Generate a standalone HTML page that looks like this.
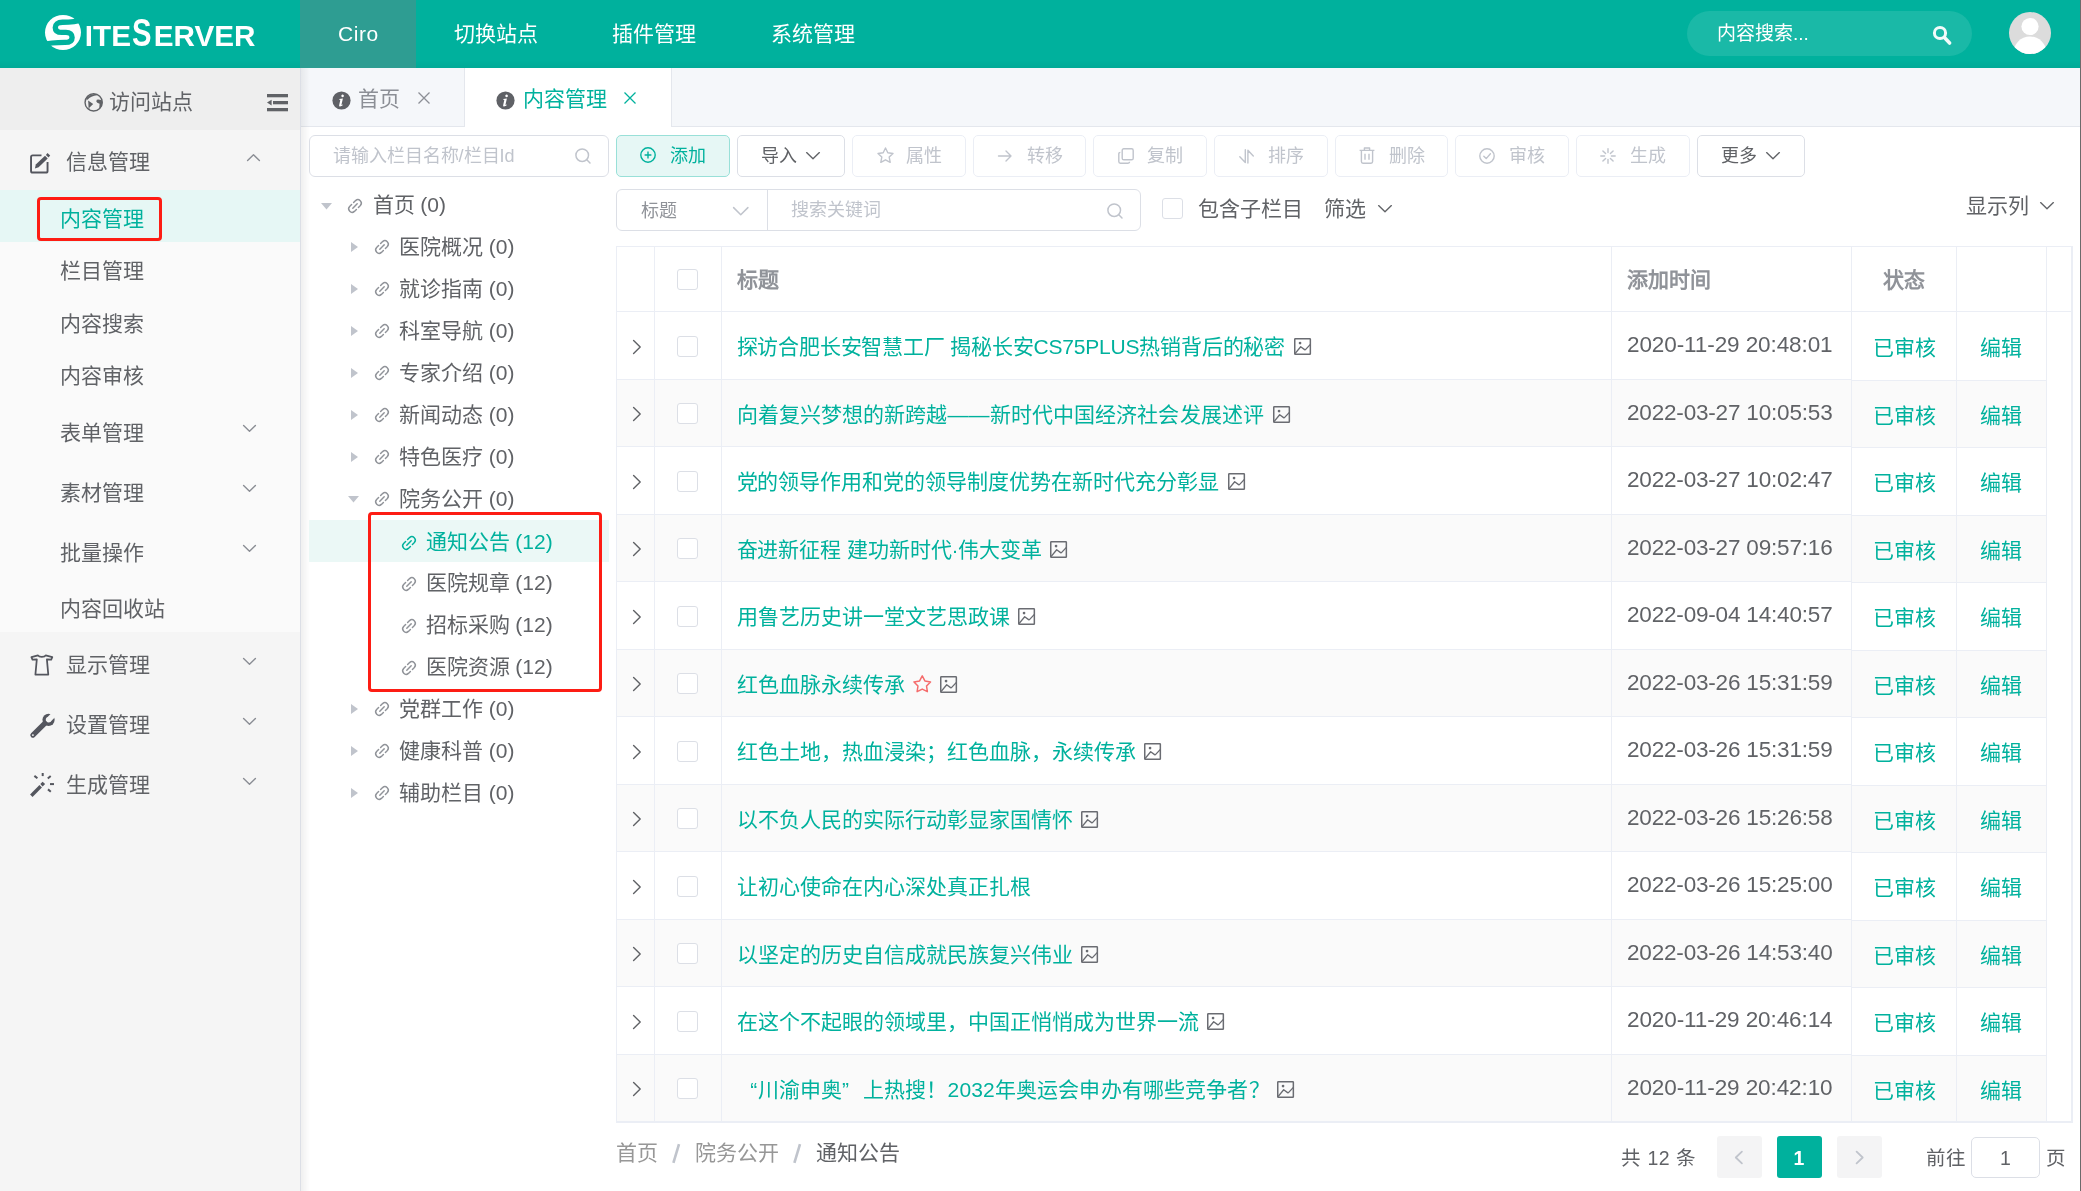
<!DOCTYPE html>
<html lang="zh-CN"><head><meta charset="utf-8"><title>SiteServer CMS</title><style>
*{box-sizing:border-box;margin:0;padding:0}
html,body{width:2081px;height:1191px;overflow:hidden;background:#fff}
body{position:relative;font-family:"Liberation Sans",sans-serif;color:#606266;font-size:21px}
#app{position:absolute;left:0;top:0;width:2081px;height:1191px;will-change:transform}
.a{position:absolute}
.t{position:absolute;white-space:nowrap;line-height:30px;height:30px}
svg{position:absolute;overflow:visible}
.hdr{left:0;top:0;width:2081px;height:68px;background:#00b19d}
.side{left:0;top:68px;width:300px;height:1123px;background:#f5f5f5}
.btn{position:absolute;top:135px;height:42px;border:1px solid #ebeef5;border-radius:5px;background:#fff;color:#c0c4cc;font-size:18px}
.btn .t{top:5px}
.cb{position:absolute;width:21px;height:21px;border:1px solid #dcdfe6;border-radius:3px;background:#fff}
.row{position:absolute;left:617px;width:1429px;height:68px}
</style></head><body>
<div id="app">
<div class="a hdr"></div>
<div class="a" style="left:0;top:60px;width:2081px;height:8px;background:linear-gradient(rgba(0,0,0,0),rgba(0,0,0,0.04))"></div>
<div class="a" style="left:300px;top:0;width:116px;height:68px;background:#2e9d92"></div>
<svg style="left:0px;top:0px" width="300" height="68" viewBox="0 0 300 68" >
<ellipse cx="63" cy="32.5" rx="18" ry="17.6" fill="#fff"/>
<path d="M83 19.5 C76 22 70 22.3 62.5 22.3 C57.5 22.3 55.3 24.6 55.3 27.4 C55.3 30.4 57.5 32.4 62 32.4 L66 32.4 C70 32.4 72.1 34.4 72.1 37.4 C72.1 40.4 70 42.4 65 42.4 C58 42.4 50 42.6 42 45" fill="none" stroke="#00b19d" stroke-width="5.4"/>
<g fill="#fff" font-family="Liberation Sans, sans-serif" font-weight="bold">
<text x="84.8" y="46" font-size="30" textLength="46.2" lengthAdjust="spacingAndGlyphs">ITE</text>
<text x="132" y="46" font-size="38.5" textLength="19.5" lengthAdjust="spacingAndGlyphs">S</text>
<text x="153.8" y="46" font-size="30" textLength="101.6" lengthAdjust="spacingAndGlyphs">ERVER</text>
</g>
</svg>
<div class="t" style="left:338px;top:19px;font-size:21px;color:#fff;letter-spacing:0.6px;">Ciro</div>
<div class="t" style="left:454px;top:19px;font-size:21px;color:#fff;">切换站点</div>
<div class="t" style="left:612px;top:19px;font-size:21px;color:#fff;">插件管理</div>
<div class="t" style="left:771px;top:19px;font-size:21px;color:#fff;">系统管理</div>
<div class="a" style="left:1687px;top:11px;width:285px;height:45px;border-radius:23px;background:rgba(255,255,255,0.1)"></div>
<div class="t" style="left:1717px;top:19px;font-size:19px;color:#fff;">内容搜索...</div>
<svg style="left:1931px;top:24px" width="22" height="22" viewBox="0 0 22 22" ><circle cx="9" cy="9" r="5.6" fill="none" stroke="#f2fbfa" stroke-width="3"/><path d="M13.4 13.6 L18.6 19" stroke="#f2fbfa" stroke-width="3.6" stroke-linecap="round"/></svg>
<svg style="left:2009px;top:12px" width="42" height="42" viewBox="0 0 42 42" ><defs><clipPath id="av"><circle cx="21" cy="21" r="21"/></clipPath></defs><circle cx="21" cy="21" r="21" fill="#dcdcdc"/><g clip-path="url(#av)" fill="#fff"><circle cx="21" cy="14.5" r="8.6"/><ellipse cx="21" cy="42" rx="17" ry="17.5"/></g></svg>
<div class="a side"></div>
<div class="a" style="left:0;top:68px;width:300px;height:62px;background:#eeeeee"></div>
<div class="a" style="left:0;top:190px;width:300px;height:442px;background:#fafafa"></div>
<div class="a" style="left:0;top:190px;width:300px;height:52px;background:#e6f7f5"></div>
<div class="a" style="left:300px;top:68px;width:1px;height:1123px;background:#dcdfe6"></div>
<svg style="left:84px;top:92.5px" width="19.2" height="19.2" viewBox="0 0 19.2 19.2" ><circle cx="9.65" cy="9.4" r="8.6" fill="none" stroke="#606266" stroke-width="1.4"/><path d="M4.1 7.5 L9.2 11 L5.3 14.8 L5.5 17 L4.6 16.4 L4.4 11 Z" fill="#606266"/><path d="M2 6.2 C3.4 3.2 7 1 12.8 1.1 L13.2 2.2 C9 2.6 5.6 4.2 3.6 6.8 Z" fill="#606266"/><path d="M12.8 6.7 L14.4 6.4 L16.9 6.9 L18.2 8 C18.8 11 17.8 14 15.2 15.9 L15.6 10.7 L13.3 9.7 L12.3 8.5 Z" fill="#606266"/></svg>
<div class="t" style="left:108.5px;top:87px;font-size:21px;color:#606266;">访问站点</div>
<svg style="left:267px;top:94px" width="21" height="17.4" viewBox="0 0 21 17.4" ><rect x="0" y="0" width="21" height="3.3" fill="#606266"/><rect x="6" y="7" width="15" height="3.3" fill="#606266"/><rect x="0" y="14" width="21" height="3.3" fill="#606266"/><path d="M0 8.6 L4.6 5.8 L4.6 11.4 Z" fill="#606266"/></svg>
<svg style="left:30px;top:153.5px" width="20" height="20" viewBox="0 0 20 20" ><path d="M11.5 1.35 H2.7 Q1.05 1.35 1.05 3 V16.9 Q1.05 18.55 2.7 18.55 H15.9 Q17.55 18.55 17.55 16.9 V8" fill="none" stroke="#54565e" stroke-width="1.9"/><path d="M4.9 14.4 L5.8 10.5 L15 1.8 L17.7 4.6 L8.6 13.2 Z" fill="#54565e"/><path d="M15.9 0.9 L17.5 -1.1 L20.2 1.6 L18.5 3.6 Z" fill="#54565e"/></svg>
<div class="t" style="left:66px;top:147px;font-size:21px;color:#606266;">信息管理</div>
<svg style="left:247.0px;top:154.0px" width="13" height="7" viewBox="0 0 13 7" ><path d="M0.6 6.4 L6.5 0.8 L12.4 6.4" fill="none" stroke="#8a8d94" stroke-width="1.4" stroke-linecap="round" stroke-linejoin="round"/></svg>
<div class="t" style="left:60px;top:204px;font-size:21px;color:#00b19d;">内容管理</div>
<div class="t" style="left:60px;top:256px;font-size:21px;color:#606266;">栏目管理</div>
<div class="t" style="left:60px;top:309px;font-size:21px;color:#606266;">内容搜索</div>
<div class="t" style="left:60px;top:361px;font-size:21px;color:#606266;">内容审核</div>
<div class="t" style="left:60px;top:418px;font-size:21px;color:#606266;">表单管理</div>
<svg style="left:242.5px;top:424.5px" width="13" height="7" viewBox="0 0 13 7" ><path d="M0.6 0.6 L6.5 6.2 L12.4 0.6" fill="none" stroke="#8a8d94" stroke-width="1.4" stroke-linecap="round" stroke-linejoin="round"/></svg>
<div class="t" style="left:60px;top:478px;font-size:21px;color:#606266;">素材管理</div>
<svg style="left:242.5px;top:484.5px" width="13" height="7" viewBox="0 0 13 7" ><path d="M0.6 0.6 L6.5 6.2 L12.4 0.6" fill="none" stroke="#8a8d94" stroke-width="1.4" stroke-linecap="round" stroke-linejoin="round"/></svg>
<div class="t" style="left:60px;top:538px;font-size:21px;color:#606266;">批量操作</div>
<svg style="left:242.5px;top:544.5px" width="13" height="7" viewBox="0 0 13 7" ><path d="M0.6 0.6 L6.5 6.2 L12.4 0.6" fill="none" stroke="#8a8d94" stroke-width="1.4" stroke-linecap="round" stroke-linejoin="round"/></svg>
<div class="t" style="left:60px;top:594px;font-size:21px;color:#606266;">内容回收站</div>
<div class="a" style="left:37px;top:197px;width:125px;height:44px;border:3px solid #fd1d14;border-radius:4px"></div>
<div class="t" style="left:66px;top:650px;font-size:21px;color:#606266;">显示管理</div>
<svg style="left:242.5px;top:657.5px" width="13" height="7" viewBox="0 0 13 7" ><path d="M0.6 0.6 L6.5 6.2 L12.4 0.6" fill="none" stroke="#8a8d94" stroke-width="1.4" stroke-linecap="round" stroke-linejoin="round"/></svg>
<div class="t" style="left:66px;top:710px;font-size:21px;color:#606266;">设置管理</div>
<svg style="left:242.5px;top:717.5px" width="13" height="7" viewBox="0 0 13 7" ><path d="M0.6 0.6 L6.5 6.2 L12.4 0.6" fill="none" stroke="#8a8d94" stroke-width="1.4" stroke-linecap="round" stroke-linejoin="round"/></svg>
<div class="t" style="left:66px;top:770px;font-size:21px;color:#606266;">生成管理</div>
<svg style="left:242.5px;top:777.5px" width="13" height="7" viewBox="0 0 13 7" ><path d="M0.6 0.6 L6.5 6.2 L12.4 0.6" fill="none" stroke="#8a8d94" stroke-width="1.4" stroke-linecap="round" stroke-linejoin="round"/></svg>
<svg style="left:30px;top:654px" width="23.6" height="22" viewBox="0 0 23.6 22" ><path d="M8 1.3 L1.4 3.1 L2.5 5.7 L6.8 5.3 L5.4 20.6 H18.3 L16.9 5.3 L21.2 5.7 L22.3 3.1 L15.7 1.3 C14.6 3.4 9.1 3.4 8 1.3 Z" fill="none" stroke="#54565e" stroke-width="1.75" stroke-linejoin="round"/></svg>
<svg style="left:29.7px;top:713.5px" width="24" height="24" viewBox="0 0 24 24" ><circle cx="18.55" cy="5.85" r="6.1" fill="#54565e"/><path d="M18.55 5.85 L26 -1.6" stroke="#f5f5f5" stroke-width="5.5"/><circle cx="18.55" cy="5.85" r="2.75" fill="#f5f5f5"/><path d="M2.9 21.1 L14.8 9.4" stroke="#54565e" stroke-width="5.2" stroke-linecap="round"/><circle cx="2.9" cy="21.1" r="0.95" fill="#f5f5f5"/></svg>
<svg style="left:30px;top:773px" width="23.6" height="23.6" viewBox="0 0 23.6 23.6" ><path d="M1.3 22.7 L10.7 13.3" stroke="#54565e" stroke-width="3.5"/><path d="M10.3 11 L12.6 8.7 L15.1 11 L12.6 13.6 Z" fill="#54565e"/><g stroke="#54565e" stroke-width="2"><path d="M12.7 0 V3.1"/><path d="M4.4 2.9 L7.4 5.3"/><path d="M20.7 3 L17.8 5.4"/><path d="M20 11.1 H24"/><path d="M18 16.4 L20.8 18.7"/></g></svg>
<div class="a" style="left:301px;top:68px;width:1780px;height:59px;background:#f5f7fa;border-bottom:1px solid #e4e7ed"></div>
<div class="a" style="left:464px;top:68px;width:1px;height:59px;background:#e4e7ed"></div>
<div class="a" style="left:465px;top:68px;width:206px;height:59px;background:#fff"></div>
<div class="a" style="left:671px;top:68px;width:1px;height:59px;background:#e4e7ed"></div>
<div class="a" style="left:301px;top:68px;width:9px;height:1123px;background:linear-gradient(90deg,rgba(0,0,0,0.06),rgba(0,0,0,0))"></div>
<svg style="left:331.5px;top:90.5px" width="19" height="19" viewBox="0 0 19 19" ><circle cx="9.5" cy="9.5" r="9.1" fill="#5f6166"/><path d="M10.6 3.6 a1.3 1.3 0 1 1 -0.01 0 Z" fill="#fff"/><path d="M7.2 8 L10.9 7.4 L9.5 13.6 C9.4 14.2 9.7 14.2 10.6 13.6 L10.8 14 C9.8 15 8.8 15.4 8.1 15.4 C7.2 15.4 7 14.8 7.2 13.9 L8.3 8.9 L7.1 8.6 Z" fill="#fff"/></svg>
<div class="t" style="left:357.5px;top:84px;font-size:21px;color:#8c8f96;">首页</div>
<svg style="left:417.6px;top:91.6px" width="12" height="12" viewBox="0 0 12 12" ><path d="M0.5 0.5 L11.5 11.5 M11.5 0.5 L0.5 11.5" stroke="#8c8f96" stroke-width="1.25"/></svg>
<svg style="left:496.0px;top:90.5px" width="19" height="19" viewBox="0 0 19 19" ><circle cx="9.5" cy="9.5" r="9.1" fill="#5f6166"/><path d="M10.6 3.6 a1.3 1.3 0 1 1 -0.01 0 Z" fill="#fff"/><path d="M7.2 8 L10.9 7.4 L9.5 13.6 C9.4 14.2 9.7 14.2 10.6 13.6 L10.8 14 C9.8 15 8.8 15.4 8.1 15.4 C7.2 15.4 7 14.8 7.2 13.9 L8.3 8.9 L7.1 8.6 Z" fill="#fff"/></svg>
<div class="t" style="left:522.5px;top:84px;font-size:21px;color:#00b19d;">内容管理</div>
<svg style="left:624.4px;top:91.6px" width="12" height="12" viewBox="0 0 12 12" ><path d="M0.5 0.5 L11.5 11.5 M11.5 0.5 L0.5 11.5" stroke="#00b19d" stroke-width="1.25"/></svg>
<div class="a" style="left:309px;top:135px;width:300px;height:42px;border:1px solid #dcdfe6;border-radius:6px;background:#fff"></div>
<div class="t" style="left:332.5px;top:141px;font-size:18px;color:#c0c4cc;">请输入栏目名称/栏目Id</div>
<svg style="left:574.8px;top:148.2px" width="16" height="16" viewBox="0 0 16 16" ><circle cx="7.2" cy="7.2" r="6.3" fill="none" stroke="#c0c4cc" stroke-width="1.5"/><path d="M11.8 11.8 L15 15" stroke="#c0c4cc" stroke-width="1.5" stroke-linecap="round"/></svg>
<div class="a" style="left:309px;top:520px;width:300px;height:42px;background:#ebf8f6"></div>
<svg style="left:321.3px;top:202.8px" width="11" height="6.4" viewBox="0 0 11 6.4" ><path d="M0 0 L11 0 L5.5 6.4 Z" fill="#c0c4cc"/></svg>
<svg style="left:347px;top:198px" width="16" height="16" viewBox="0 0 16 16" ><g fill="none" stroke="#909399" stroke-width="1.45" stroke-linecap="round"><path d="M6.6 4.6 L8.6 2.6 A3.4 3.4 0 0 1 13.4 7.4 L11.4 9.4"/><path d="M9.4 11.4 L7.4 13.4 A3.4 3.4 0 0 1 2.6 8.6 L4.6 6.6"/><path d="M5.8 10.2 L10.2 5.8"/></g></svg>
<div class="t" style="left:372.5px;top:190px;font-size:21px;color:#606266;">首页 (0)</div>
<svg style="left:350.9px;top:242.2px" width="7" height="10" viewBox="0 0 7 10" ><path d="M0 0 L7 5 L0 10 Z" fill="#c0c4cc"/></svg>
<svg style="left:373.5px;top:239px" width="16" height="16" viewBox="0 0 16 16" ><g fill="none" stroke="#909399" stroke-width="1.45" stroke-linecap="round"><path d="M6.6 4.6 L8.6 2.6 A3.4 3.4 0 0 1 13.4 7.4 L11.4 9.4"/><path d="M9.4 11.4 L7.4 13.4 A3.4 3.4 0 0 1 2.6 8.6 L4.6 6.6"/><path d="M5.8 10.2 L10.2 5.8"/></g></svg>
<div class="t" style="left:399px;top:232px;font-size:21px;color:#606266;">医院概况 (0)</div>
<svg style="left:350.9px;top:284.2px" width="7" height="10" viewBox="0 0 7 10" ><path d="M0 0 L7 5 L0 10 Z" fill="#c0c4cc"/></svg>
<svg style="left:373.5px;top:281px" width="16" height="16" viewBox="0 0 16 16" ><g fill="none" stroke="#909399" stroke-width="1.45" stroke-linecap="round"><path d="M6.6 4.6 L8.6 2.6 A3.4 3.4 0 0 1 13.4 7.4 L11.4 9.4"/><path d="M9.4 11.4 L7.4 13.4 A3.4 3.4 0 0 1 2.6 8.6 L4.6 6.6"/><path d="M5.8 10.2 L10.2 5.8"/></g></svg>
<div class="t" style="left:399px;top:274px;font-size:21px;color:#606266;">就诊指南 (0)</div>
<svg style="left:350.9px;top:326.2px" width="7" height="10" viewBox="0 0 7 10" ><path d="M0 0 L7 5 L0 10 Z" fill="#c0c4cc"/></svg>
<svg style="left:373.5px;top:323px" width="16" height="16" viewBox="0 0 16 16" ><g fill="none" stroke="#909399" stroke-width="1.45" stroke-linecap="round"><path d="M6.6 4.6 L8.6 2.6 A3.4 3.4 0 0 1 13.4 7.4 L11.4 9.4"/><path d="M9.4 11.4 L7.4 13.4 A3.4 3.4 0 0 1 2.6 8.6 L4.6 6.6"/><path d="M5.8 10.2 L10.2 5.8"/></g></svg>
<div class="t" style="left:399px;top:316px;font-size:21px;color:#606266;">科室导航 (0)</div>
<svg style="left:350.9px;top:368.2px" width="7" height="10" viewBox="0 0 7 10" ><path d="M0 0 L7 5 L0 10 Z" fill="#c0c4cc"/></svg>
<svg style="left:373.5px;top:365px" width="16" height="16" viewBox="0 0 16 16" ><g fill="none" stroke="#909399" stroke-width="1.45" stroke-linecap="round"><path d="M6.6 4.6 L8.6 2.6 A3.4 3.4 0 0 1 13.4 7.4 L11.4 9.4"/><path d="M9.4 11.4 L7.4 13.4 A3.4 3.4 0 0 1 2.6 8.6 L4.6 6.6"/><path d="M5.8 10.2 L10.2 5.8"/></g></svg>
<div class="t" style="left:399px;top:358px;font-size:21px;color:#606266;">专家介绍 (0)</div>
<svg style="left:350.9px;top:410.2px" width="7" height="10" viewBox="0 0 7 10" ><path d="M0 0 L7 5 L0 10 Z" fill="#c0c4cc"/></svg>
<svg style="left:373.5px;top:407px" width="16" height="16" viewBox="0 0 16 16" ><g fill="none" stroke="#909399" stroke-width="1.45" stroke-linecap="round"><path d="M6.6 4.6 L8.6 2.6 A3.4 3.4 0 0 1 13.4 7.4 L11.4 9.4"/><path d="M9.4 11.4 L7.4 13.4 A3.4 3.4 0 0 1 2.6 8.6 L4.6 6.6"/><path d="M5.8 10.2 L10.2 5.8"/></g></svg>
<div class="t" style="left:399px;top:400px;font-size:21px;color:#606266;">新闻动态 (0)</div>
<svg style="left:350.9px;top:452.2px" width="7" height="10" viewBox="0 0 7 10" ><path d="M0 0 L7 5 L0 10 Z" fill="#c0c4cc"/></svg>
<svg style="left:373.5px;top:449px" width="16" height="16" viewBox="0 0 16 16" ><g fill="none" stroke="#909399" stroke-width="1.45" stroke-linecap="round"><path d="M6.6 4.6 L8.6 2.6 A3.4 3.4 0 0 1 13.4 7.4 L11.4 9.4"/><path d="M9.4 11.4 L7.4 13.4 A3.4 3.4 0 0 1 2.6 8.6 L4.6 6.6"/><path d="M5.8 10.2 L10.2 5.8"/></g></svg>
<div class="t" style="left:399px;top:442px;font-size:21px;color:#606266;">特色医疗 (0)</div>
<svg style="left:348.3px;top:495.8px" width="11" height="6.4" viewBox="0 0 11 6.4" ><path d="M0 0 L11 0 L5.5 6.4 Z" fill="#c0c4cc"/></svg>
<svg style="left:373.5px;top:491px" width="16" height="16" viewBox="0 0 16 16" ><g fill="none" stroke="#909399" stroke-width="1.45" stroke-linecap="round"><path d="M6.6 4.6 L8.6 2.6 A3.4 3.4 0 0 1 13.4 7.4 L11.4 9.4"/><path d="M9.4 11.4 L7.4 13.4 A3.4 3.4 0 0 1 2.6 8.6 L4.6 6.6"/><path d="M5.8 10.2 L10.2 5.8"/></g></svg>
<div class="t" style="left:399px;top:484px;font-size:21px;color:#606266;">院务公开 (0)</div>
<svg style="left:350.9px;top:704.2px" width="7" height="10" viewBox="0 0 7 10" ><path d="M0 0 L7 5 L0 10 Z" fill="#c0c4cc"/></svg>
<svg style="left:373.5px;top:701px" width="16" height="16" viewBox="0 0 16 16" ><g fill="none" stroke="#909399" stroke-width="1.45" stroke-linecap="round"><path d="M6.6 4.6 L8.6 2.6 A3.4 3.4 0 0 1 13.4 7.4 L11.4 9.4"/><path d="M9.4 11.4 L7.4 13.4 A3.4 3.4 0 0 1 2.6 8.6 L4.6 6.6"/><path d="M5.8 10.2 L10.2 5.8"/></g></svg>
<div class="t" style="left:399px;top:694px;font-size:21px;color:#606266;">党群工作 (0)</div>
<svg style="left:350.9px;top:746.2px" width="7" height="10" viewBox="0 0 7 10" ><path d="M0 0 L7 5 L0 10 Z" fill="#c0c4cc"/></svg>
<svg style="left:373.5px;top:743px" width="16" height="16" viewBox="0 0 16 16" ><g fill="none" stroke="#909399" stroke-width="1.45" stroke-linecap="round"><path d="M6.6 4.6 L8.6 2.6 A3.4 3.4 0 0 1 13.4 7.4 L11.4 9.4"/><path d="M9.4 11.4 L7.4 13.4 A3.4 3.4 0 0 1 2.6 8.6 L4.6 6.6"/><path d="M5.8 10.2 L10.2 5.8"/></g></svg>
<div class="t" style="left:399px;top:736px;font-size:21px;color:#606266;">健康科普 (0)</div>
<svg style="left:350.9px;top:788.2px" width="7" height="10" viewBox="0 0 7 10" ><path d="M0 0 L7 5 L0 10 Z" fill="#c0c4cc"/></svg>
<svg style="left:373.5px;top:785px" width="16" height="16" viewBox="0 0 16 16" ><g fill="none" stroke="#909399" stroke-width="1.45" stroke-linecap="round"><path d="M6.6 4.6 L8.6 2.6 A3.4 3.4 0 0 1 13.4 7.4 L11.4 9.4"/><path d="M9.4 11.4 L7.4 13.4 A3.4 3.4 0 0 1 2.6 8.6 L4.6 6.6"/><path d="M5.8 10.2 L10.2 5.8"/></g></svg>
<div class="t" style="left:399px;top:778px;font-size:21px;color:#606266;">辅助栏目 (0)</div>
<svg style="left:401px;top:535.0px" width="16" height="16" viewBox="0 0 16 16" ><g fill="none" stroke="#00b19d" stroke-width="1.45" stroke-linecap="round"><path d="M6.6 4.6 L8.6 2.6 A3.4 3.4 0 0 1 13.4 7.4 L11.4 9.4"/><path d="M9.4 11.4 L7.4 13.4 A3.4 3.4 0 0 1 2.6 8.6 L4.6 6.6"/><path d="M5.8 10.2 L10.2 5.8"/></g></svg>
<div class="t" style="left:425.5px;top:527px;font-size:21px;color:#00b19d;">通知公告 (12)</div>
<svg style="left:401px;top:575.5px" width="16" height="16" viewBox="0 0 16 16" ><g fill="none" stroke="#909399" stroke-width="1.45" stroke-linecap="round"><path d="M6.6 4.6 L8.6 2.6 A3.4 3.4 0 0 1 13.4 7.4 L11.4 9.4"/><path d="M9.4 11.4 L7.4 13.4 A3.4 3.4 0 0 1 2.6 8.6 L4.6 6.6"/><path d="M5.8 10.2 L10.2 5.8"/></g></svg>
<div class="t" style="left:425.5px;top:568px;font-size:21px;color:#606266;">医院规章 (12)</div>
<svg style="left:401px;top:617.5px" width="16" height="16" viewBox="0 0 16 16" ><g fill="none" stroke="#909399" stroke-width="1.45" stroke-linecap="round"><path d="M6.6 4.6 L8.6 2.6 A3.4 3.4 0 0 1 13.4 7.4 L11.4 9.4"/><path d="M9.4 11.4 L7.4 13.4 A3.4 3.4 0 0 1 2.6 8.6 L4.6 6.6"/><path d="M5.8 10.2 L10.2 5.8"/></g></svg>
<div class="t" style="left:425.5px;top:610px;font-size:21px;color:#606266;">招标采购 (12)</div>
<svg style="left:401px;top:659.5px" width="16" height="16" viewBox="0 0 16 16" ><g fill="none" stroke="#909399" stroke-width="1.45" stroke-linecap="round"><path d="M6.6 4.6 L8.6 2.6 A3.4 3.4 0 0 1 13.4 7.4 L11.4 9.4"/><path d="M9.4 11.4 L7.4 13.4 A3.4 3.4 0 0 1 2.6 8.6 L4.6 6.6"/><path d="M5.8 10.2 L10.2 5.8"/></g></svg>
<div class="t" style="left:425.5px;top:652px;font-size:21px;color:#606266;">医院资源 (12)</div>
<div class="a" style="left:368px;top:511.5px;width:233.5px;height:180px;border:3px solid #fd1d14;border-radius:4px"></div>
<div class="btn" style="left:616px;width:114px;background:#e6f7f5;border-color:#99e0d8;color:#00b19d"><div class="t" style="left:52.5px;font-size:18px">添加</div></div>
<div class="btn" style="left:737px;width:108px;border-color:#dcdfe6;color:#606266"><div class="t" style="left:22.5px;font-size:18px">导入</div></div>
<div class="btn" style="left:852px;width:114px;"><div class="t" style="left:53px;font-size:18px">属性</div></div>
<div class="btn" style="left:973px;width:113px;"><div class="t" style="left:53px;font-size:18px">转移</div></div>
<div class="btn" style="left:1093px;width:114px;"><div class="t" style="left:53px;font-size:18px">复制</div></div>
<div class="btn" style="left:1214px;width:114px;"><div class="t" style="left:53px;font-size:18px">排序</div></div>
<div class="btn" style="left:1335px;width:113px;"><div class="t" style="left:53px;font-size:18px">删除</div></div>
<div class="btn" style="left:1455px;width:114px;"><div class="t" style="left:53px;font-size:18px">审核</div></div>
<div class="btn" style="left:1576px;width:114px;"><div class="t" style="left:53px;font-size:18px">生成</div></div>
<div class="btn" style="left:1697px;width:108px;border-color:#dcdfe6;color:#606266"><div class="t" style="left:22.5px;font-size:18px">更多</div></div>
<svg style="left:806.0px;top:151.7px" width="14" height="7.6" viewBox="0 0 14 7.6" ><path d="M0.6 0.6 L7.0 6.8 L13.4 0.6" fill="none" stroke="#606266" stroke-width="1.35" stroke-linecap="round" stroke-linejoin="round"/></svg>
<svg style="left:1766.0px;top:151.7px" width="14" height="7.6" viewBox="0 0 14 7.6" ><path d="M0.6 0.6 L7.0 6.8 L13.4 0.6" fill="none" stroke="#606266" stroke-width="1.35" stroke-linecap="round" stroke-linejoin="round"/></svg>
<svg style="left:640px;top:147px" width="16" height="16" viewBox="0 0 16 16" ><circle cx="8" cy="8" r="7.2" fill="none" stroke="#00b19d" stroke-width="1.4"/><path d="M8 4.6 V11.4 M4.6 8 H11.4" stroke="#00b19d" stroke-width="1.4"/></svg>
<svg style="left:876.5px;top:147px" width="17" height="16.5" viewBox="0 0 17 16.5" ><path d="M8.5 1 L10.8 5.8 L16 6.5 L12.2 10.1 L13.2 15.3 L8.5 12.8 L3.8 15.3 L4.8 10.1 L1 6.5 L6.2 5.8 Z" fill="none" stroke="#c0c4cc" stroke-width="1.4" stroke-linejoin="round"/></svg>
<svg style="left:998px;top:149.5px" width="14" height="12" viewBox="0 0 14 12" ><path d="M0.5 6 H13 M8 1 L13 6 L8 11" fill="none" stroke="#c0c4cc" stroke-width="1.4" stroke-linecap="round" stroke-linejoin="round"/></svg>
<svg style="left:1118px;top:147.5px" width="16" height="16" viewBox="0 0 16 16" ><rect x="4.2" y="0.8" width="11" height="11" rx="1.6" fill="none" stroke="#c0c4cc" stroke-width="1.4"/><path d="M2.4 4.4 Q0.8 4.4 0.8 6 V13.6 Q0.8 15.2 2.4 15.2 H10 Q11.6 15.2 11.6 13.8" fill="none" stroke="#c0c4cc" stroke-width="1.4"/></svg>
<svg style="left:1239px;top:148.8px" width="15" height="15" viewBox="0 0 15 15" ><path d="M6.3 0.8 V13.6 L0.8 7.8 M8.9 14 V1.2 L14.3 7" fill="none" stroke="#c0c4cc" stroke-width="1.4" stroke-linecap="round" stroke-linejoin="round"/></svg>
<svg style="left:1359px;top:147px" width="16" height="17" viewBox="0 0 16 17" ><path d="M0.6 3.4 H15.4 M5.4 3.2 V1 H10.6 V3.2 M2.4 3.6 V14.6 Q2.4 16.2 4 16.2 H12 Q13.6 16.2 13.6 14.6 V3.6 M6 6.8 V12.8 M10 6.8 V12.8" fill="none" stroke="#c0c4cc" stroke-width="1.4" stroke-linejoin="round"/></svg>
<svg style="left:1479px;top:147.5px" width="16" height="16" viewBox="0 0 16 16" ><circle cx="8" cy="8" r="7.2" fill="none" stroke="#c0c4cc" stroke-width="1.4"/><path d="M4.8 8.2 L7.2 10.6 L11.4 5.8" fill="none" stroke="#c0c4cc" stroke-width="1.4" stroke-linecap="round" stroke-linejoin="round"/></svg>
<svg style="left:1600px;top:147.5px" width="16" height="16" viewBox="0 0 16 16" ><g stroke="#c0c4cc" stroke-width="1.4" stroke-linecap="round"><path d="M8 0.8 V4.6"/><path d="M8 11.4 V15.2"/><path d="M0.8 8 H4.6"/><path d="M11.4 8 H15.2"/><path d="M2.9 2.9 L5.6 5.6"/><path d="M10.4 10.4 L13.1 13.1"/><path d="M2.9 13.1 L5.6 10.4"/><path d="M10.4 5.6 L13.1 2.9"/></g></svg>
<div class="a" style="left:616px;top:189px;width:525px;height:42px;border:1px solid #dcdfe6;border-radius:6px;background:#fff"></div>
<div class="a" style="left:767px;top:189px;width:1px;height:42px;background:#dcdfe6"></div>
<div class="t" style="left:640.5px;top:196px;font-size:18px;color:#909399;">标题</div>
<svg style="left:733.25px;top:207.0px" width="15.5" height="8.6" viewBox="0 0 15.5 8.6" ><path d="M0.6 0.6 L7.75 7.8 L14.9 0.6" fill="none" stroke="#c0c4cc" stroke-width="1.5" stroke-linecap="round" stroke-linejoin="round"/></svg>
<div class="t" style="left:790.5px;top:195px;font-size:18px;color:#c0c4cc;">搜索关键词</div>
<svg style="left:1107px;top:202.5px" width="16" height="16" viewBox="0 0 16 16" ><circle cx="7.2" cy="7.2" r="6.3" fill="none" stroke="#c0c4cc" stroke-width="1.5"/><path d="M11.8 11.8 L15 15" stroke="#c0c4cc" stroke-width="1.5" stroke-linecap="round"/></svg>
<div class="cb" style="left:1162px;top:198px"></div>
<div class="t" style="left:1198px;top:194px;font-size:21px;color:#606266;">包含子栏目</div>
<div class="t" style="left:1324px;top:194px;font-size:21px;color:#606266;">筛选</div>
<svg style="left:1377.5px;top:204.5px" width="14" height="7.6" viewBox="0 0 14 7.6" ><path d="M0.6 0.6 L7.0 6.8 L13.4 0.6" fill="none" stroke="#606266" stroke-width="1.35" stroke-linecap="round" stroke-linejoin="round"/></svg>
<div class="t" style="left:1966px;top:191px;font-size:21px;color:#606266;">显示列</div>
<svg style="left:2040.3px;top:202.2px" width="14" height="7.6" viewBox="0 0 14 7.6" ><path d="M0.6 0.6 L7.0 6.8 L13.4 0.6" fill="none" stroke="#606266" stroke-width="1.35" stroke-linecap="round" stroke-linejoin="round"/></svg>
<div class="a" style="left:616px;top:246px;width:1457px;height:877px;border:1px solid #ebeef5;border-right-width:2px;background:#fff"></div>
<div class="a" style="left:617px;top:380px;width:1234px;height:66px;background:#fafafa"></div>
<div class="a" style="left:1851px;top:381px;width:195px;height:66px;background:#fafafa"></div>
<div class="a" style="left:617px;top:515px;width:1234px;height:66px;background:#fafafa"></div>
<div class="a" style="left:1851px;top:516px;width:195px;height:66px;background:#fafafa"></div>
<div class="a" style="left:617px;top:650px;width:1234px;height:66px;background:#fafafa"></div>
<div class="a" style="left:1851px;top:651px;width:195px;height:66px;background:#fafafa"></div>
<div class="a" style="left:617px;top:785px;width:1234px;height:66px;background:#fafafa"></div>
<div class="a" style="left:1851px;top:786px;width:195px;height:66px;background:#fafafa"></div>
<div class="a" style="left:617px;top:920px;width:1234px;height:66px;background:#fafafa"></div>
<div class="a" style="left:1851px;top:921px;width:195px;height:66px;background:#fafafa"></div>
<div class="a" style="left:617px;top:1055px;width:1234px;height:66px;background:#fafafa"></div>
<div class="a" style="left:1851px;top:1056px;width:195px;height:65px;background:#fafafa"></div>
<div class="a" style="left:617px;top:311px;width:1454px;height:1px;background:#ebeef5"></div>
<div class="a" style="left:617px;top:379px;width:1234px;height:1px;background:#ebeef5"></div>
<div class="a" style="left:1851px;top:380px;width:195px;height:1px;background:#ebeef5"></div>
<div class="a" style="left:617px;top:446px;width:1234px;height:1px;background:#ebeef5"></div>
<div class="a" style="left:1851px;top:447px;width:195px;height:1px;background:#ebeef5"></div>
<div class="a" style="left:617px;top:514px;width:1234px;height:1px;background:#ebeef5"></div>
<div class="a" style="left:1851px;top:515px;width:195px;height:1px;background:#ebeef5"></div>
<div class="a" style="left:617px;top:581px;width:1234px;height:1px;background:#ebeef5"></div>
<div class="a" style="left:1851px;top:582px;width:195px;height:1px;background:#ebeef5"></div>
<div class="a" style="left:617px;top:649px;width:1234px;height:1px;background:#ebeef5"></div>
<div class="a" style="left:1851px;top:650px;width:195px;height:1px;background:#ebeef5"></div>
<div class="a" style="left:617px;top:716px;width:1234px;height:1px;background:#ebeef5"></div>
<div class="a" style="left:1851px;top:717px;width:195px;height:1px;background:#ebeef5"></div>
<div class="a" style="left:617px;top:784px;width:1234px;height:1px;background:#ebeef5"></div>
<div class="a" style="left:1851px;top:785px;width:195px;height:1px;background:#ebeef5"></div>
<div class="a" style="left:617px;top:851px;width:1234px;height:1px;background:#ebeef5"></div>
<div class="a" style="left:1851px;top:852px;width:195px;height:1px;background:#ebeef5"></div>
<div class="a" style="left:617px;top:919px;width:1234px;height:1px;background:#ebeef5"></div>
<div class="a" style="left:1851px;top:920px;width:195px;height:1px;background:#ebeef5"></div>
<div class="a" style="left:617px;top:986px;width:1234px;height:1px;background:#ebeef5"></div>
<div class="a" style="left:1851px;top:987px;width:195px;height:1px;background:#ebeef5"></div>
<div class="a" style="left:617px;top:1054px;width:1234px;height:1px;background:#ebeef5"></div>
<div class="a" style="left:1851px;top:1055px;width:195px;height:1px;background:#ebeef5"></div>
<div class="a" style="left:617px;top:1121px;width:1454px;height:1px;background:#ebeef5"></div>
<div class="a" style="left:654px;top:247px;width:1px;height:875px;background:#ebeef5"></div>
<div class="a" style="left:721px;top:247px;width:1px;height:875px;background:#ebeef5"></div>
<div class="a" style="left:1611px;top:247px;width:1px;height:875px;background:#ebeef5"></div>
<div class="a" style="left:1851px;top:247px;width:1px;height:875px;background:#ebeef5"></div>
<div class="a" style="left:1956px;top:247px;width:1px;height:875px;background:#ebeef5"></div>
<div class="a" style="left:2046px;top:247px;width:1px;height:875px;background:#ebeef5"></div>
<div class="cb" style="left:677px;top:269px"></div>
<div class="t" style="left:737px;top:265px;font-size:21px;color:#909399;font-weight:bold;">标题</div>
<div class="t" style="left:1627px;top:265px;font-size:21px;color:#909399;font-weight:bold;">添加时间</div>
<div class="t" style="left:1883px;top:265px;font-size:21px;color:#909399;font-weight:bold;">状态</div>
<svg style="left:633.2px;top:339.75px" width="8" height="14" viewBox="0 0 8 14" ><path d="M0.6 0.6 L7.2 7.0 L0.6 13.4" fill="none" stroke="#606266" stroke-width="1.4" stroke-linecap="round" stroke-linejoin="round"/></svg>
<div class="cb" style="left:677px;top:336.0px"></div>
<div class="t" style="left:736.5px;top:332px;font-size:21px;color:#00b19d;"><span style="letter-spacing:-0.191px">探访合肥长安智慧工厂 揭秘长安CS75PLUS热销背后的秘密</span></div>
<div class="t" style="left:1627px;top:330px;font-size:22.5px;color:#606266;"><span style="letter-spacing:-0.093px">2020-11-29 20:48:01</span></div>
<div class="t" style="left:1872.5px;top:333px;font-size:21px;color:#00b19d;">已审核</div>
<div class="t" style="left:1980px;top:333px;font-size:21px;color:#00b19d;">编辑</div>
<svg style="left:1294px;top:338.0px" width="17.1" height="17.1" viewBox="0 0 17.1 17.1" ><rect x="0.75" y="0.75" width="15.6" height="15.6" rx="0.6" fill="none" stroke="#6a6c72" stroke-width="1.5"/><circle cx="6.05" cy="5.05" r="1.35" fill="#6a6c72"/><path d="M1 15.6 L6.7 8.8 L10.6 11.6 Q11.2 11.9 11.7 11.4 L16.4 6.4" fill="none" stroke="#6a6c72" stroke-width="1.35" stroke-linejoin="round"/></svg>
<svg style="left:633.2px;top:407.25px" width="8" height="14" viewBox="0 0 8 14" ><path d="M0.6 0.6 L7.2 7.0 L0.6 13.4" fill="none" stroke="#606266" stroke-width="1.4" stroke-linecap="round" stroke-linejoin="round"/></svg>
<div class="cb" style="left:677px;top:403.0px"></div>
<div class="t" style="left:736.5px;top:400px;font-size:21px;color:#00b19d;"><span style="letter-spacing:0.1px">向着复兴梦想的新跨越——新时代中国经济社会发展述评</span></div>
<div class="t" style="left:1627px;top:398px;font-size:22.5px;color:#606266;"><span style="letter-spacing:-0.181px">2022-03-27 10:05:53</span></div>
<div class="t" style="left:1872.5px;top:401px;font-size:21px;color:#00b19d;">已审核</div>
<div class="t" style="left:1980px;top:401px;font-size:21px;color:#00b19d;">编辑</div>
<svg style="left:1273px;top:405.5px" width="17.1" height="17.1" viewBox="0 0 17.1 17.1" ><rect x="0.75" y="0.75" width="15.6" height="15.6" rx="0.6" fill="none" stroke="#6a6c72" stroke-width="1.5"/><circle cx="6.05" cy="5.05" r="1.35" fill="#6a6c72"/><path d="M1 15.6 L6.7 8.8 L10.6 11.6 Q11.2 11.9 11.7 11.4 L16.4 6.4" fill="none" stroke="#6a6c72" stroke-width="1.35" stroke-linejoin="round"/></svg>
<svg style="left:633.2px;top:474.75px" width="8" height="14" viewBox="0 0 8 14" ><path d="M0.6 0.6 L7.2 7.0 L0.6 13.4" fill="none" stroke="#606266" stroke-width="1.4" stroke-linecap="round" stroke-linejoin="round"/></svg>
<div class="cb" style="left:677px;top:471.0px"></div>
<div class="t" style="left:736.5px;top:467px;font-size:21px;color:#00b19d;"><span style="letter-spacing:-0.022px">党的领导作用和党的领导制度优势在新时代充分彰显</span></div>
<div class="t" style="left:1627px;top:465px;font-size:22.5px;color:#606266;"><span style="letter-spacing:-0.181px">2022-03-27 10:02:47</span></div>
<div class="t" style="left:1872.5px;top:468px;font-size:21px;color:#00b19d;">已审核</div>
<div class="t" style="left:1980px;top:468px;font-size:21px;color:#00b19d;">编辑</div>
<svg style="left:1228px;top:473.0px" width="17.1" height="17.1" viewBox="0 0 17.1 17.1" ><rect x="0.75" y="0.75" width="15.6" height="15.6" rx="0.6" fill="none" stroke="#6a6c72" stroke-width="1.5"/><circle cx="6.05" cy="5.05" r="1.35" fill="#6a6c72"/><path d="M1 15.6 L6.7 8.8 L10.6 11.6 Q11.2 11.9 11.7 11.4 L16.4 6.4" fill="none" stroke="#6a6c72" stroke-width="1.35" stroke-linejoin="round"/></svg>
<svg style="left:633.2px;top:542.25px" width="8" height="14" viewBox="0 0 8 14" ><path d="M0.6 0.6 L7.2 7.0 L0.6 13.4" fill="none" stroke="#606266" stroke-width="1.4" stroke-linecap="round" stroke-linejoin="round"/></svg>
<div class="cb" style="left:677px;top:538.0px"></div>
<div class="t" style="left:736.5px;top:535px;font-size:21px;color:#00b19d;"><span style="letter-spacing:-0.083px">奋进新征程 建功新时代·伟大变革</span></div>
<div class="t" style="left:1627px;top:533px;font-size:22.5px;color:#606266;"><span style="letter-spacing:-0.181px">2022-03-27 09:57:16</span></div>
<div class="t" style="left:1872.5px;top:536px;font-size:21px;color:#00b19d;">已审核</div>
<div class="t" style="left:1980px;top:536px;font-size:21px;color:#00b19d;">编辑</div>
<svg style="left:1050px;top:540.5px" width="17.1" height="17.1" viewBox="0 0 17.1 17.1" ><rect x="0.75" y="0.75" width="15.6" height="15.6" rx="0.6" fill="none" stroke="#6a6c72" stroke-width="1.5"/><circle cx="6.05" cy="5.05" r="1.35" fill="#6a6c72"/><path d="M1 15.6 L6.7 8.8 L10.6 11.6 Q11.2 11.9 11.7 11.4 L16.4 6.4" fill="none" stroke="#6a6c72" stroke-width="1.35" stroke-linejoin="round"/></svg>
<svg style="left:633.2px;top:609.75px" width="8" height="14" viewBox="0 0 8 14" ><path d="M0.6 0.6 L7.2 7.0 L0.6 13.4" fill="none" stroke="#606266" stroke-width="1.4" stroke-linecap="round" stroke-linejoin="round"/></svg>
<div class="cb" style="left:677px;top:606.0px"></div>
<div class="t" style="left:736.5px;top:602px;font-size:21px;color:#00b19d;"><span style="letter-spacing:0.038px">用鲁艺历史讲一堂文艺思政课</span></div>
<div class="t" style="left:1627px;top:600px;font-size:22.5px;color:#606266;"><span style="letter-spacing:-0.181px">2022-09-04 14:40:57</span></div>
<div class="t" style="left:1872.5px;top:603px;font-size:21px;color:#00b19d;">已审核</div>
<div class="t" style="left:1980px;top:603px;font-size:21px;color:#00b19d;">编辑</div>
<svg style="left:1018px;top:608.0px" width="17.1" height="17.1" viewBox="0 0 17.1 17.1" ><rect x="0.75" y="0.75" width="15.6" height="15.6" rx="0.6" fill="none" stroke="#6a6c72" stroke-width="1.5"/><circle cx="6.05" cy="5.05" r="1.35" fill="#6a6c72"/><path d="M1 15.6 L6.7 8.8 L10.6 11.6 Q11.2 11.9 11.7 11.4 L16.4 6.4" fill="none" stroke="#6a6c72" stroke-width="1.35" stroke-linejoin="round"/></svg>
<svg style="left:633.2px;top:677.25px" width="8" height="14" viewBox="0 0 8 14" ><path d="M0.6 0.6 L7.2 7.0 L0.6 13.4" fill="none" stroke="#606266" stroke-width="1.4" stroke-linecap="round" stroke-linejoin="round"/></svg>
<div class="cb" style="left:677px;top:673.0px"></div>
<div class="t" style="left:736.5px;top:670px;font-size:21px;color:#00b19d;"><span style="letter-spacing:0.062px">红色血脉永续传承</span></div>
<div class="t" style="left:1627px;top:668px;font-size:22.5px;color:#606266;"><span style="letter-spacing:-0.181px">2022-03-26 15:31:59</span></div>
<div class="t" style="left:1872.5px;top:671px;font-size:21px;color:#00b19d;">已审核</div>
<div class="t" style="left:1980px;top:671px;font-size:21px;color:#00b19d;">编辑</div>
<svg style="left:912.5px;top:675.0px" width="18.5" height="18.5" viewBox="0 0 18.5 18.5" ><path d="M9.25 0.90 L11.90 5.96 L17.52 6.91 L13.53 10.99 L14.36 16.64 L9.25 14.10 L4.14 16.64 L4.97 10.99 L0.98 6.91 L6.60 5.96 Z" fill="none" stroke="#f56c6c" stroke-width="1.5" stroke-linejoin="round"/></svg>
<svg style="left:940px;top:675.5px" width="17.1" height="17.1" viewBox="0 0 17.1 17.1" ><rect x="0.75" y="0.75" width="15.6" height="15.6" rx="0.6" fill="none" stroke="#6a6c72" stroke-width="1.5"/><circle cx="6.05" cy="5.05" r="1.35" fill="#6a6c72"/><path d="M1 15.6 L6.7 8.8 L10.6 11.6 Q11.2 11.9 11.7 11.4 L16.4 6.4" fill="none" stroke="#6a6c72" stroke-width="1.35" stroke-linejoin="round"/></svg>
<svg style="left:633.2px;top:744.75px" width="8" height="14" viewBox="0 0 8 14" ><path d="M0.6 0.6 L7.2 7.0 L0.6 13.4" fill="none" stroke="#606266" stroke-width="1.4" stroke-linecap="round" stroke-linejoin="round"/></svg>
<div class="cb" style="left:677px;top:741.0px"></div>
<div class="t" style="left:736.5px;top:737px;font-size:21px;color:#00b19d;"><span style="letter-spacing:0.026px">红色土地，热血浸染；红色血脉，永续传承</span></div>
<div class="t" style="left:1627px;top:735px;font-size:22.5px;color:#606266;"><span style="letter-spacing:-0.181px">2022-03-26 15:31:59</span></div>
<div class="t" style="left:1872.5px;top:738px;font-size:21px;color:#00b19d;">已审核</div>
<div class="t" style="left:1980px;top:738px;font-size:21px;color:#00b19d;">编辑</div>
<svg style="left:1144px;top:743.0px" width="17.1" height="17.1" viewBox="0 0 17.1 17.1" ><rect x="0.75" y="0.75" width="15.6" height="15.6" rx="0.6" fill="none" stroke="#6a6c72" stroke-width="1.5"/><circle cx="6.05" cy="5.05" r="1.35" fill="#6a6c72"/><path d="M1 15.6 L6.7 8.8 L10.6 11.6 Q11.2 11.9 11.7 11.4 L16.4 6.4" fill="none" stroke="#6a6c72" stroke-width="1.35" stroke-linejoin="round"/></svg>
<svg style="left:633.2px;top:812.25px" width="8" height="14" viewBox="0 0 8 14" ><path d="M0.6 0.6 L7.2 7.0 L0.6 13.4" fill="none" stroke="#606266" stroke-width="1.4" stroke-linecap="round" stroke-linejoin="round"/></svg>
<div class="cb" style="left:677px;top:808.0px"></div>
<div class="t" style="left:736.5px;top:805px;font-size:21px;color:#00b19d;"><span style="letter-spacing:0.031px">以不负人民的实际行动彰显家国情怀</span></div>
<div class="t" style="left:1627px;top:803px;font-size:22.5px;color:#606266;"><span style="letter-spacing:-0.181px">2022-03-26 15:26:58</span></div>
<div class="t" style="left:1872.5px;top:806px;font-size:21px;color:#00b19d;">已审核</div>
<div class="t" style="left:1980px;top:806px;font-size:21px;color:#00b19d;">编辑</div>
<svg style="left:1081px;top:810.5px" width="17.1" height="17.1" viewBox="0 0 17.1 17.1" ><rect x="0.75" y="0.75" width="15.6" height="15.6" rx="0.6" fill="none" stroke="#6a6c72" stroke-width="1.5"/><circle cx="6.05" cy="5.05" r="1.35" fill="#6a6c72"/><path d="M1 15.6 L6.7 8.8 L10.6 11.6 Q11.2 11.9 11.7 11.4 L16.4 6.4" fill="none" stroke="#6a6c72" stroke-width="1.35" stroke-linejoin="round"/></svg>
<svg style="left:633.2px;top:879.75px" width="8" height="14" viewBox="0 0 8 14" ><path d="M0.6 0.6 L7.2 7.0 L0.6 13.4" fill="none" stroke="#606266" stroke-width="1.4" stroke-linecap="round" stroke-linejoin="round"/></svg>
<div class="cb" style="left:677px;top:876.0px"></div>
<div class="t" style="left:736.5px;top:872px;font-size:21px;color:#00b19d;"><span style="letter-spacing:0.036px">让初心使命在内心深处真正扎根</span></div>
<div class="t" style="left:1627px;top:870px;font-size:22.5px;color:#606266;"><span style="letter-spacing:-0.181px">2022-03-26 15:25:00</span></div>
<div class="t" style="left:1872.5px;top:873px;font-size:21px;color:#00b19d;">已审核</div>
<div class="t" style="left:1980px;top:873px;font-size:21px;color:#00b19d;">编辑</div>
<svg style="left:633.2px;top:947.25px" width="8" height="14" viewBox="0 0 8 14" ><path d="M0.6 0.6 L7.2 7.0 L0.6 13.4" fill="none" stroke="#606266" stroke-width="1.4" stroke-linecap="round" stroke-linejoin="round"/></svg>
<div class="cb" style="left:677px;top:943.0px"></div>
<div class="t" style="left:736.5px;top:940px;font-size:21px;color:#00b19d;"><span style="letter-spacing:0.031px">以坚定的历史自信成就民族复兴伟业</span></div>
<div class="t" style="left:1627px;top:938px;font-size:22.5px;color:#606266;"><span style="letter-spacing:-0.181px">2022-03-26 14:53:40</span></div>
<div class="t" style="left:1872.5px;top:941px;font-size:21px;color:#00b19d;">已审核</div>
<div class="t" style="left:1980px;top:941px;font-size:21px;color:#00b19d;">编辑</div>
<svg style="left:1081px;top:945.5px" width="17.1" height="17.1" viewBox="0 0 17.1 17.1" ><rect x="0.75" y="0.75" width="15.6" height="15.6" rx="0.6" fill="none" stroke="#6a6c72" stroke-width="1.5"/><circle cx="6.05" cy="5.05" r="1.35" fill="#6a6c72"/><path d="M1 15.6 L6.7 8.8 L10.6 11.6 Q11.2 11.9 11.7 11.4 L16.4 6.4" fill="none" stroke="#6a6c72" stroke-width="1.35" stroke-linejoin="round"/></svg>
<svg style="left:633.2px;top:1014.75px" width="8" height="14" viewBox="0 0 8 14" ><path d="M0.6 0.6 L7.2 7.0 L0.6 13.4" fill="none" stroke="#606266" stroke-width="1.4" stroke-linecap="round" stroke-linejoin="round"/></svg>
<div class="cb" style="left:677px;top:1011.0px"></div>
<div class="t" style="left:736.5px;top:1007px;font-size:21px;color:#00b19d;"><span style="letter-spacing:0.023px">在这个不起眼的领域里，中国正悄悄成为世界一流</span></div>
<div class="t" style="left:1627px;top:1005px;font-size:22.5px;color:#606266;"><span style="letter-spacing:-0.093px">2020-11-29 20:46:14</span></div>
<div class="t" style="left:1872.5px;top:1008px;font-size:21px;color:#00b19d;">已审核</div>
<div class="t" style="left:1980px;top:1008px;font-size:21px;color:#00b19d;">编辑</div>
<svg style="left:1207px;top:1013.0px" width="17.1" height="17.1" viewBox="0 0 17.1 17.1" ><rect x="0.75" y="0.75" width="15.6" height="15.6" rx="0.6" fill="none" stroke="#6a6c72" stroke-width="1.5"/><circle cx="6.05" cy="5.05" r="1.35" fill="#6a6c72"/><path d="M1 15.6 L6.7 8.8 L10.6 11.6 Q11.2 11.9 11.7 11.4 L16.4 6.4" fill="none" stroke="#6a6c72" stroke-width="1.35" stroke-linejoin="round"/></svg>
<svg style="left:633.2px;top:1082.25px" width="8" height="14" viewBox="0 0 8 14" ><path d="M0.6 0.6 L7.2 7.0 L0.6 13.4" fill="none" stroke="#606266" stroke-width="1.4" stroke-linecap="round" stroke-linejoin="round"/></svg>
<div class="cb" style="left:677px;top:1078.0px"></div>
<div class="t" style="left:736.5px;top:1075px;font-size:21px;color:#00b19d;"><span style="letter-spacing:0.14px"><span style="display:inline-block;width:21px;text-align:right">“</span>川渝申奥<span style="display:inline-block;width:21px;text-align:left">”</span>上热搜！2032年奥运会申办有哪些竞争者？</span></div>
<div class="t" style="left:1627px;top:1073px;font-size:22.5px;color:#606266;"><span style="letter-spacing:-0.093px">2020-11-29 20:42:10</span></div>
<div class="t" style="left:1872.5px;top:1076px;font-size:21px;color:#00b19d;">已审核</div>
<div class="t" style="left:1980px;top:1076px;font-size:21px;color:#00b19d;">编辑</div>
<svg style="left:1277px;top:1080.5px" width="17.1" height="17.1" viewBox="0 0 17.1 17.1" ><rect x="0.75" y="0.75" width="15.6" height="15.6" rx="0.6" fill="none" stroke="#6a6c72" stroke-width="1.5"/><circle cx="6.05" cy="5.05" r="1.35" fill="#6a6c72"/><path d="M1 15.6 L6.7 8.8 L10.6 11.6 Q11.2 11.9 11.7 11.4 L16.4 6.4" fill="none" stroke="#6a6c72" stroke-width="1.35" stroke-linejoin="round"/></svg>
<div class="t" style="left:616px;top:1138px;font-size:21px;color:#979797;">首页</div>
<svg style="left:670px;top:1142px" width="12" height="23" viewBox="0 0 12 23" ><path d="M3.4 20.8 L9 2.2" stroke="#c0c4cc" stroke-width="2.6"/></svg>
<div class="t" style="left:695px;top:1138px;font-size:21px;color:#979797;">院务公开</div>
<svg style="left:791px;top:1142px" width="12" height="23" viewBox="0 0 12 23" ><path d="M3.4 20.8 L9 2.2" stroke="#c0c4cc" stroke-width="2.6"/></svg>
<div class="t" style="left:816px;top:1138px;font-size:21px;color:#606266;">通知公告</div>
<div class="t" style="left:1621px;top:1143px;font-size:19.5px;color:#606266;letter-spacing:0.5px;">共 12 条</div>
<div class="a" style="left:1717px;top:1136px;width:45px;height:42px;border-radius:3px;background:#f4f4f5"></div>
<div class="a" style="left:1777px;top:1136px;width:45px;height:42px;border-radius:3px;background:#00b19d"></div>
<div class="a" style="left:1837px;top:1136px;width:45px;height:42px;border-radius:3px;background:#f4f4f5"></div>
<svg style="left:1734.75px;top:1151.0px" width="7.5" height="13" viewBox="0 0 7.5 13" ><path d="M6.9 0.6 L0.8 6.5 L6.9 12.4" fill="none" stroke="#c0c4cc" stroke-width="1.8" stroke-linecap="round" stroke-linejoin="round"/></svg>
<svg style="left:1856.25px;top:1151.0px" width="7.5" height="13" viewBox="0 0 7.5 13" ><path d="M0.6 0.6 L6.7 6.5 L0.6 12.4" fill="none" stroke="#c0c4cc" stroke-width="1.8" stroke-linecap="round" stroke-linejoin="round"/></svg>
<div class="t" style="left:1793.5px;top:1143px;font-size:19.5px;color:#fff;font-weight:bold;">1</div>
<div class="t" style="left:1926px;top:1143px;font-size:19.5px;color:#606266;">前往</div>
<div class="a" style="left:1971px;top:1137px;width:69px;height:41px;border:1px solid #dcdfe6;border-radius:5px;background:#fff"></div>
<div class="t" style="left:2000px;top:1143px;font-size:19.5px;color:#606266;">1</div>
<div class="t" style="left:2046px;top:1143px;font-size:19.5px;color:#606266;">页</div>
<div class="a" style="left:2080px;top:0;width:1px;height:1191px;background:#6b6b6b"></div>
</div>
</body></html>
